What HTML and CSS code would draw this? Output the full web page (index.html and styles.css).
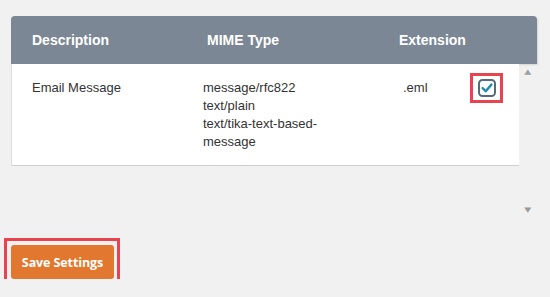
FILE: index.html
```html
<!DOCTYPE html>
<html>
<head>
<meta charset="utf-8">
<link rel="stylesheet" href="styles.css">
</head>
<body>
<div class="page">
  <div class="table">
    <div class="thead">
      <div class="th th-desc">Description</div>
      <div class="th th-mime">MIME Type</div>
      <div class="th th-ext">Extension</div>
    </div>
    <div class="scroll">
      <div class="tbody">
        <div class="row">
          <div class="td td-desc">Email Message</div>
          <div class="td td-mime">message/rfc822<br>text/plain<br>text/tika-text-based-<br>message</div>
          <div class="td td-ext">.eml</div>
          <div class="td td-check">
            <span class="checkbox">
              <svg width="18" height="18" viewBox="0 0 18 18"><rect x="1" y="1" width="16" height="16" rx="3.5" fill="#fff" stroke="#546b7e" stroke-width="2"/><path d="M4.6 9.2 L7.7 12.2 L13.4 5.6" fill="none" stroke="#1c8db3" stroke-width="2.4" stroke-linecap="round" stroke-linejoin="round"/></svg>
            </span>
            <span class="highlight hl-check"></span>
          </div>
        </div>
      </div>
      <div class="scrollbar">
        <span class="sb-btn sb-up">&#9650;</span>
        <span class="sb-btn sb-down">&#9660;</span>
      </div>
    </div>
  </div>
  <div class="actions">
    <button class="btn-save">Save Settings</button>
    <span class="highlight hl-btn"></span>
  </div>
</div>
</body>
</html>
```

FILE: styles.css
```css
html, body {
  margin: 0;
  padding: 0;
  background: #f1f1f1;
  font-family: "Liberation Sans", Arial, sans-serif;
}
.page {
  padding: 16px 13px 0 11px;
}
.table {
  width: 526px;
}
.thead {
  height: 48px;
  background: #7b8794;
  border-radius: 4px 4px 0 0;
  display: grid;
  grid-template-columns: 175px 192px 159px;
  align-items: center;
  box-shadow: 1px 1px 2px rgba(0,0,0,0.12);
}
.th {
  color: #fff;
  font-weight: bold;
  font-size: 14px;
  padding-left: 21px;
  padding-bottom: 1px;
}
.scroll {
  display: flex;
  height: 152px;
}
.tbody {
  width: 507px;
  height: 101px;
  background: #fff;
  border-left: 1px solid #dcdcdc;
  border-bottom: 1px solid #d0d0d0;
}
.row {
  display: grid;
  grid-template-columns: 191px 200px 75px 30px;
  padding-top: 15px;
}
.td {
  font-size: 13px;
  line-height: 18px;
  color: #333;
}
.td-desc { padding-left: 20px; }
.td-check {
  position: relative;
}
.checkbox {
  display: block;
  width: 18px;
  height: 18px;
}
.checkbox svg { display: block; }
.highlight {
  position: absolute;
  border: 3px solid #e9434f;
  box-sizing: border-box;
}
.hl-check {
  left: -8px;
  top: -6px;
  width: 33px;
  height: 30px;
}
.scrollbar {
  width: 18px;
  flex: none;
  display: flex;
  flex-direction: column;
  align-items: center;
  justify-content: space-between;
  padding: 3px 0 1px;
  box-sizing: border-box;
}
.sb-btn {
  display: block;
  font-family: "DejaVu Sans", sans-serif;
  font-size: 7px;
  line-height: 10px;
  transform: scaleX(1.3);
}
.sb-up { color: #a0a0a0; }
.sb-down { color: #999; }
.actions {
  position: relative;
  margin-top: 29px;
}
.btn-save {
  display: block;
  width: 103px;
  height: 34px;
  background: #e2772f;
  border: none;
  border-radius: 3px;
  color: #fff;
  font-family: "Open Sans", sans-serif;
  font-weight: 700;
  font-size: 12.5px;
  padding: 0;
  letter-spacing: -0.1px;
}
.hl-btn {
  left: -7px;
  top: -7px;
  width: 116px;
  height: 51px;
}
```
